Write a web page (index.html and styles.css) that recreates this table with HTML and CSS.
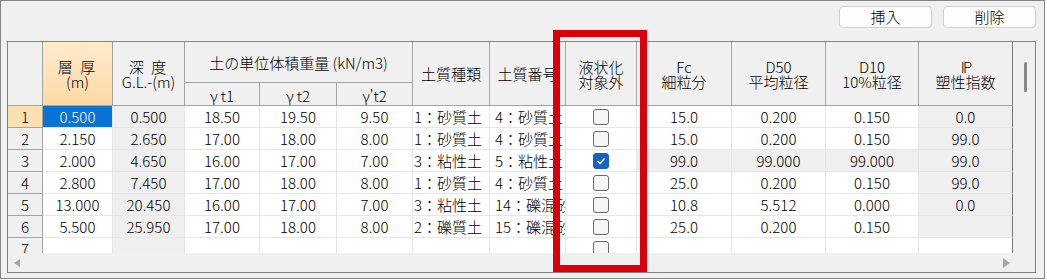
FILE: index.html
```html
<!DOCTYPE html>
<html lang="ja">

<head>
    <meta charset="UTF-8">
    <meta name="viewport" content="width=device-width, initial-scale=1.0">
    <title>地層データ</title>
    <link rel="stylesheet" href="styles.css">
</head>

<body>
    <div class="window">
        <div class="toolbar">
            <button class="btn">挿入</button>
            <button class="btn">削除</button>
        </div>

        <div class="grid-box">
            <div class="sheet">
                <!-- cabecera -->
                <div class="hd corner"></div>
                <div class="hd tall active"><span><span class="wide">層 厚</span><br>(m)</span></div>
                <div class="hd tall"><span><span class="wide">深 度</span><br>G.L.-(m)</span></div>
                <div class="hd group"><span>土の単位体積重量 (kN/m3)</span></div>
                <div class="hd tall"><span>土質種類</span></div>
                <div class="hd tall"><span>土質番号</span></div>
                <div class="hd tall"><span>液状化<br>対象外</span></div>
                <div class="hd tall"><span>Fc<br>細粒分</span></div>
                <div class="hd tall"><span>D50<br>平均粒径</span></div>
                <div class="hd tall"><span>D10<br>10%粒径</span></div>
                <div class="hd tall last"><span><span class="ip">IP</span><br>塑性指数</span></div>
                <div class="hd sub"><span>&gamma;&thinsp;t1</span></div>
                <div class="hd sub"><span>&gamma;&thinsp;t2</span></div>
                <div class="hd sub"><span>&gamma;'t2</span></div>

                <!-- fila 1 -->
                <div class="rh active">1</div>
                <div class="cell selected">0.500</div>
                <div class="cell ro">0.500</div>
                <div class="cell">18.50</div>
                <div class="cell">19.50</div>
                <div class="cell">9.50</div>
                <div class="cell txt">1：砂質土</div>
                <div class="cell txt num">4：砂質土</div>
                <div class="cell"><span class="check"></span></div>
                <div class="cell">15.0</div>
                <div class="cell">0.200</div>
                <div class="cell">0.150</div>
                <div class="cell ro last">0.0</div>

                <!-- fila 2 -->
                <div class="rh">2</div>
                <div class="cell">2.150</div>
                <div class="cell ro">2.650</div>
                <div class="cell">17.00</div>
                <div class="cell">18.00</div>
                <div class="cell">8.00</div>
                <div class="cell txt">1：砂質土</div>
                <div class="cell txt num">4：砂質土</div>
                <div class="cell"><span class="check"></span></div>
                <div class="cell">15.0</div>
                <div class="cell">0.200</div>
                <div class="cell">0.150</div>
                <div class="cell ro last">99.0</div>

                <!-- fila 3 -->
                <div class="rh">3</div>
                <div class="cell">2.000</div>
                <div class="cell ro">4.650</div>
                <div class="cell">16.00</div>
                <div class="cell">17.00</div>
                <div class="cell">7.00</div>
                <div class="cell txt">3：粘性土</div>
                <div class="cell txt num">5：粘性土</div>
                <div class="cell"><span class="check on"><svg width="10" height="8" viewBox="0 0 10 8"><path d="M1.5 4 L4 6.5 L8.5 1.5" fill="none" stroke="#fff" stroke-width="1.3"/></svg></span></div>
                <div class="cell ro">99.0</div>
                <div class="cell ro">99.000</div>
                <div class="cell ro">99.000</div>
                <div class="cell ro last">99.0</div>

                <!-- fila 4 -->
                <div class="rh">4</div>
                <div class="cell">2.800</div>
                <div class="cell ro">7.450</div>
                <div class="cell">17.00</div>
                <div class="cell">18.00</div>
                <div class="cell">8.00</div>
                <div class="cell txt">1：砂質土</div>
                <div class="cell txt num">4：砂質土</div>
                <div class="cell"><span class="check"></span></div>
                <div class="cell">25.0</div>
                <div class="cell">0.200</div>
                <div class="cell">0.150</div>
                <div class="cell ro last">99.0</div>

                <!-- fila 5 -->
                <div class="rh">5</div>
                <div class="cell">13.000</div>
                <div class="cell ro">20.450</div>
                <div class="cell">16.00</div>
                <div class="cell">17.00</div>
                <div class="cell">7.00</div>
                <div class="cell txt">3：粘性土</div>
                <div class="cell txt num">14：礫混砂</div>
                <div class="cell"><span class="check"></span></div>
                <div class="cell">10.8</div>
                <div class="cell">5.512</div>
                <div class="cell">0.000</div>
                <div class="cell ro last">0.0</div>

                <!-- fila 6 -->
                <div class="rh">6</div>
                <div class="cell">5.500</div>
                <div class="cell ro">25.950</div>
                <div class="cell">17.00</div>
                <div class="cell">18.00</div>
                <div class="cell">8.00</div>
                <div class="cell txt">2：礫質土</div>
                <div class="cell txt num">15：礫混砂</div>
                <div class="cell"><span class="check"></span></div>
                <div class="cell">25.0</div>
                <div class="cell">0.200</div>
                <div class="cell">0.150</div>
                <div class="cell ro last"></div>

                <!-- fila 7 (vacía) -->
                <div class="rh">7</div>
                <div class="cell"></div>
                <div class="cell ro"></div>
                <div class="cell"></div>
                <div class="cell"></div>
                <div class="cell"></div>
                <div class="cell txt"></div>
                <div class="cell txt num"></div>
                <div class="cell"><span class="check"></span></div>
                <div class="cell"></div>
                <div class="cell"></div>
                <div class="cell"></div>
                <div class="cell last"></div>
            </div>

            <div class="vscroll"><span class="thumb"></span></div>

            <div class="hscroll">
                <svg width="6" height="8" viewBox="0 0 6 8"><path d="M6 0 L0 4 L6 8 Z" fill="#a6a6a6"/></svg>
                <svg width="7" height="10" viewBox="0 0 7 10"><path d="M0 0 L7 5 L0 10 Z" fill="#a6a6a6"/></svg>
            </div>
        </div>

        <div class="mark"></div>
    </div>
</body>
</html>
```

FILE: styles.css
```css
body {
    margin: 0;
    background: #fff;
    font-family: "Noto Sans CJK JP", "Noto Sans", sans-serif;
    font-size: 15px;
    font-weight: 300;
    color: #000;
}

.window {
    position: relative;
    width: 1045px;
    height: 279px;
    box-sizing: border-box;
    border: 1px solid #858585;
    background: #f0f0f0;
    padding: 5px 8px 0 6px;
}

/* botones de arriba */
.toolbar {
    display: flex;
    justify-content: flex-end;
    gap: 11px;
    margin-bottom: 13px;
}

.btn {
    width: 93px;
    height: 22px;
    padding: 0;
    border: 1px solid #d0d0d0;
    border-radius: 4px;
    background: #fdfdfd;
    font-family: inherit;
    font-size: 15px;
    font-weight: inherit;
    line-height: 20px;
    color: #000;
}

/* tabla con barras de desplazamiento */
.grid-box {
    width: 1029px;
    height: 232px;
    box-sizing: border-box;
    border: 1px solid #828282;
    display: grid;
    grid-template-columns: 1005px 22px;
    grid-template-rows: 211px 19px;
    background: #f0f0f0;
}

.sheet {
    overflow: hidden;
    display: grid;
    grid-template-columns: 35px 70px 72px 75px 77px 76px 77px 76px 71px 95px 94px 93px 94px;
    grid-template-rows: 41px 23px;
    grid-auto-rows: 22px;
    align-content: start;
    background: #fff;
}

.sheet > div {
    box-sizing: border-box;
    display: flex;
    align-items: center;
    justify-content: center;
    overflow: hidden;
    white-space: nowrap;
}

.hd {
    background: #f0f0f0;
    border-right: 1px solid #a3a3a3;
    border-bottom: 1px solid #a3a3a3;
    text-align: center;
    line-height: 15px;
}

.hd.tall {
    grid-row: span 2;
}

.hd.corner {
    grid-row: span 2;
}

.hd.group {
    grid-column: span 3;
    padding-top: 1px;
}

.hd.sub {
    padding-top: 2px;
}

.hd.active {
    background: linear-gradient(#ffebcd, #fdd9a4);
}

.hd .wide {
    letter-spacing: 2px;
}

.ip {
    letter-spacing: -2px;
}

.rh {
    background: #f0f0f0;
    border-right: 1px solid #a3a3a3;
    border-bottom: 1px solid #a3a3a3;
}

.rh.active {
    background: #fde0b1;
}

.cell {
    border-right: 1px solid #e6e6e6;
    border-bottom: 1px solid #e6e6e6;
}

.sheet > .txt {
    justify-content: flex-start;
    padding-left: 1px;
}

.sheet > .txt.num {
    padding-left: 5px;
}

.cell.ro {
    background: #efefef;
}

.cell.selected {
    background: #0a74d6;
    color: #fff;
}

.sheet > .last {
    border-right-color: #7a7a7a;
}

.check {
    width: 16px;
    height: 16px;
    box-sizing: border-box;
    border: 1px solid #6a6a6a;
    border-radius: 3px;
    background: #f6f6f6;
    display: flex;
    align-items: center;
    justify-content: center;
    margin-top: 1px;
}

.check.on {
    background: #1862c4;
    border-color: #1862c4;
}

.vscroll {
    position: relative;
}

.vscroll .thumb {
    position: absolute;
    left: 11px;
    top: 20px;
    width: 3px;
    height: 30px;
    border-radius: 2px;
    background: #868686;
}

.hscroll {
    grid-column: 1 / -1;
    display: flex;
    align-items: center;
    justify-content: space-between;
    padding: 0 25px 0 6px;
}

/* recuadro rojo sobre la columna de casillas */
.mark {
    position: absolute;
    left: 552px;
    top: 29px;
    width: 94px;
    height: 242px;
    box-sizing: border-box;
    border: 7px solid #d9000b;
}
```
